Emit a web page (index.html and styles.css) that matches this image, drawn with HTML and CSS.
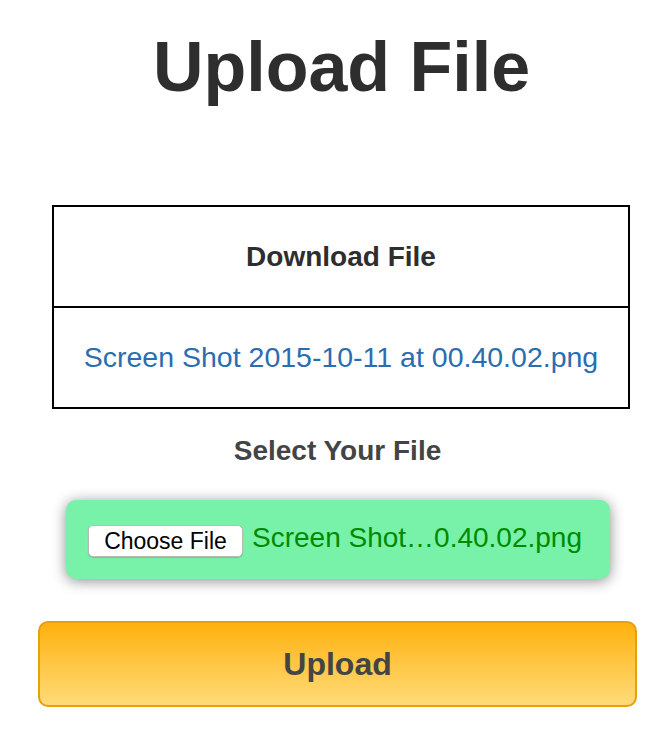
FILE: index.html
```html
<!DOCTYPE html>
<html>
<head>
<meta charset="utf-8">
<link rel="stylesheet" href="styles.css">
</head>
<body>
<main class="page">
  <h1 class="title">Upload File</h1>
  <div class="files">
    <div class="files-head">Download File</div>
    <div class="files-row"><a class="file-link" href="#">Screen Shot 2015-10-11 at 00.40.02.png</a></div>
  </div>
  <h2 class="select-label">Select Your File</h2>
  <div class="picker">
    <span class="choose-btn">Choose File</span>
    <span class="chosen-name">Screen Shot…0.40.02.png</span>
  </div>
  <button class="upload-btn" type="button">Upload</button>
</main>
</body>
</html>
```

FILE: styles.css
```css
html, body {
  margin: 0;
  padding: 0;
  background: #ffffff;
}
body {
  font-family: "Liberation Sans", Arial, Helvetica, sans-serif;
  width: 670px;
  height: 734px;
  overflow: hidden;
}
.page {
  display: flex;
  flex-direction: column;
}
.title {
  margin: 27px 0 0 0;
  padding-left: 13px;
  font-size: 70px;
  line-height: 80px;
  font-weight: bold;
  color: #2e2e2e;
  text-align: center;
}
.files {
  margin: 98px 0 0 52px;
  width: 574px;
  border: 2px solid #000;
  display: flex;
  flex-direction: column;
}
.files-head {
  height: 99px;
  border-bottom: 2px solid #000;
  display: flex;
  align-items: center;
  justify-content: center;
  font-size: 28px;
  font-weight: bold;
  color: #2e2e2e;
}
.files-row {
  height: 99px;
  display: flex;
  align-items: center;
  justify-content: center;
}
.file-link {
  font-size: 28.5px;
  color: #2a6db0;
  text-decoration: none;
}
.select-label {
  margin: 26px 0 0 5px;
  font-size: 28px;
  line-height: 32px;
  font-weight: bold;
  color: #444444;
  text-align: center;
}
.picker {
  margin: 33px 0 0 66px;
  width: 544px;
  height: 79px;
  box-sizing: border-box;
  padding-left: 22px;
  background: #78f2a8;
  border-radius: 10px;
  box-shadow: 0 2px 14px rgba(0, 0, 0, 0.45);
  display: flex;
  align-items: center;
  gap: 9px;
}
.choose-btn {
  box-sizing: border-box;
  height: 32px;
  width: 155px;
  margin-top: 3px;
  background: #ffffff;
  border: 1px solid #b9b9b9;
  border-radius: 5px;
  box-shadow: 0 1px 1px rgba(0, 0, 0, 0.15);
  display: flex;
  align-items: center;
  justify-content: center;
  font-size: 23px;
  color: #000;
}
.chosen-name {
  font-size: 28px;
  color: #008a00;
  margin-top: -4px;
}
.upload-btn {
  margin: 42px 0 0 38px;
  width: 599px;
  height: 86px;
  border: 2px solid #e5a00c;
  border-radius: 10px;
  background: linear-gradient(to bottom, #ffb10e, #ffdb7a);
  font-family: "Liberation Sans", Arial, Helvetica, sans-serif;
  font-size: 32px;
  font-weight: bold;
  color: #444444;
  padding: 0;
}
```
